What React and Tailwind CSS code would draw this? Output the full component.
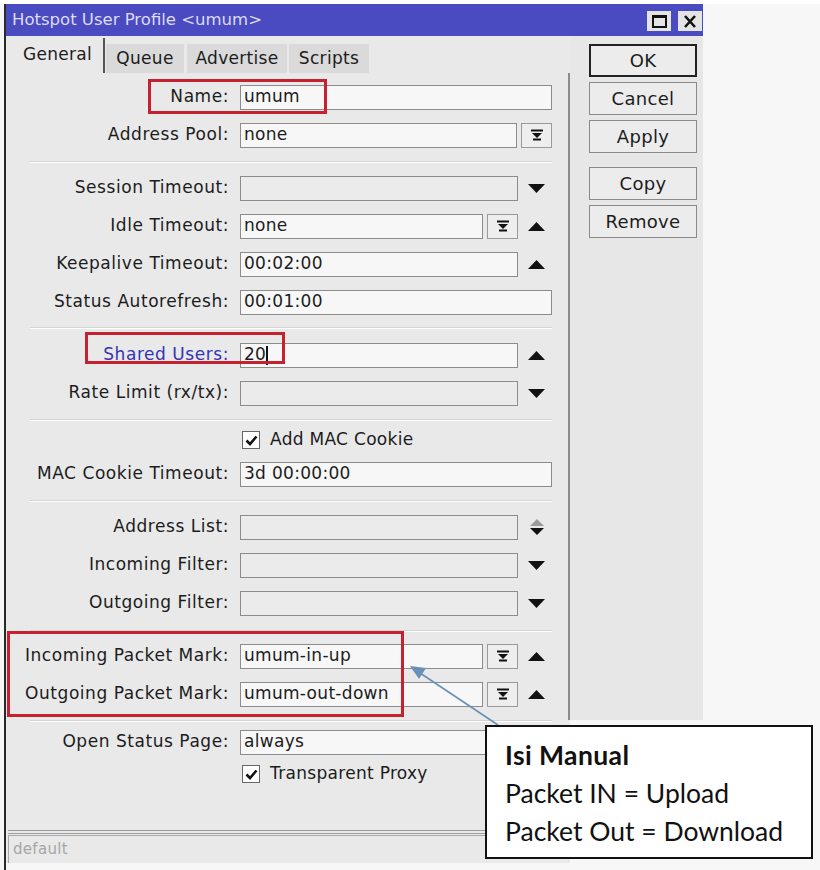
const DropBtn = () => (
  <div className="w-[31px] h-[25px] border border-[#9a9a9a] bg-[#eeeeee] flex items-center justify-center">
    <svg width="12" height="12" viewBox="0 0 12 12">
      <rect x="0" y="0.5" width="12" height="2" fill="#111" />
      <polygon points="1,4 11,4 6,9" fill="#111" />
      <rect x="2" y="9.5" width="8" height="2" fill="#111" />
    </svg>
  </div>
)

const Tri = ({ dir }) => (
  <svg width="17" height="9" viewBox="0 0 17 9">
    {dir === "up" ? <polygon points="0,9 8.5,0 17,9" fill="#111" /> : <polygon points="0,0 17,0 8.5,9" fill="#111" />}
  </svg>
)

const UpDown = () => (
  <svg width="16" height="17" viewBox="0 0 16 17">
    <polygon points="1,7 8,0 15,7" fill="#9a9a9a" />
    <polygon points="1,9 15,9 8,16" fill="#111" />
  </svg>
)

const Check = () => (
  <div className="w-[18px] h-[18px] border border-[#666] bg-white flex items-center justify-center">
    <svg width="13" height="11" viewBox="0 0 13 11">
      <path d="M1.5 5.5 L5 9 L11.5 1.5" stroke="#111" strokeWidth="2.6" fill="none" />
    </svg>
  </div>
)

const Row = ({ label, value, empty, drop, arrow, short, labelCls }) => (
  <div className="flex items-center h-[38px]">
    <div className={`w-[223px] text-right whitespace-nowrap tracking-[0.55px] ${labelCls || ""}`}>{label}</div>
    <div className="ml-[11px] w-[312px] flex items-center">
      <div
        className={`h-[25px] border border-[#8c8c8c] pl-[3px] flex items-center whitespace-nowrap overflow-hidden ${
          empty ? "bg-[#ebebeb]" : "bg-[#f7f7f7]"
        } ${short ? "w-[243px]" : drop || arrow ? "w-[278px]" : "w-[312px]"}`}
      >
        {value}
      </div>
      {drop && (
        <div className="ml-[4px]">
          <DropBtn />
        </div>
      )}
      {arrow && (
        <div className="w-[34px] flex justify-center pl-[3px]">
          {arrow === "updown" ? <UpDown /> : <Tri dir={arrow} />}
        </div>
      )}
    </div>
  </div>
)

const Sep = () => <div className="ml-[24px] w-[522px] h-[2px] border-t border-[#d3d3d3] border-b border-b-white" />

const CheckRow = ({ label, h }) => (
  <div className={`flex items-center ${h}`}>
    <div className="ml-[236px]">
      <Check />
    </div>
    <span className="ml-[10px]">{label}</span>
  </div>
)

const Btn = ({ children, main, mt }) => (
  <div
    className={`w-[108px] h-[33px] flex items-center justify-center text-[18px] bg-[#ececec] ${mt} ${
      main ? "border-2 border-[#222]" : "border border-[#8a8a8a]"
    }`}
  >
    {children}
  </div>
)

export default function App() {
  return (
    <div className="relative w-[820px] h-[870px] bg-[#f7f7f7] overflow-hidden font-['DejaVu_Sans',sans-serif] text-[17px] tracking-[0.3px] text-[#1c1c1c]">
      <div className="h-[4px] bg-white" />
      <div className="ml-[4px] w-[699px] border-l-2 border-[#2a2a2a] bg-[#f7f7f7]">
        <div className="h-[32px] bg-[#4b4bc1] flex items-center justify-between pl-[6px] pr-[1px]">
          <span className="text-[#dcdcf4] text-[16.5px] tracking-normal">Hotspot User Profile &lt;umum&gt;</span>
          <div className="flex gap-[7px] mt-[2px]">
            <div className="w-[24px] h-[20px] bg-[#e4e4e4] flex items-center justify-center">
              <div className="w-[15px] h-[13px] border-2 border-t-[3px] border-[#111]" />
            </div>
            <div className="w-[24px] h-[20px] bg-[#e4e4e4] flex items-center justify-center">
              <svg width="14" height="13" viewBox="0 0 14 13">
                <path d="M2 1 L12 12 M12 1 L2 12" stroke="#111" strokeWidth="2.6" />
              </svg>
            </div>
          </div>
        </div>

        <div className="flex items-start">
          <div className="w-[564px] bg-[#e9e9e9]">
            <div className="h-[37px] flex items-end pl-[6px]">
              <div className="h-[35px] w-[93px] border-r-2 border-[#555] flex items-center justify-center pb-[2px]">General</div>
              <div className="h-[29px] w-[78px] bg-[#dadada] flex items-center justify-center ml-[1px]">Queue</div>
              <div className="h-[29px] w-[100px] bg-[#dadada] flex items-center justify-center ml-[3px]">Advertise</div>
              <div className="h-[29px] w-[80px] bg-[#dadada] flex items-center justify-center ml-[2px]">Scripts</div>
            </div>

            <div className="border-r-2 border-[#8c8c8c] h-[647px]">
              <div className="pt-[5px] pb-[7px]">
                <Row label="Name:" value="umum" />
                <Row label="Address Pool:" value="none" drop />
              </div>
              <Sep />
              <div className="pt-[6px] pb-[6px]">
                <Row label="Session Timeout:" empty arrow="down" />
                <Row label="Idle Timeout:" value="none" short drop arrow="up" />
                <Row label="Keepalive Timeout:" value="00:02:00" arrow="up" />
                <Row label="Status Autorefresh:" value="00:01:00" />
              </div>
              <Sep />
              <div className="pt-[7px] pb-[7px]">
                <Row
                  label="Shared Users:"
                  labelCls="text-[#3434b4]"
                  value={
                    <span>
                      20<span className="inline-block w-[1.5px] h-[19px] bg-[#111] align-middle" />
                    </span>
                  }
                  arrow="up"
                />
                <Row label="Rate Limit (rx/tx):" empty arrow="down" />
              </div>
              <Sep />
              <div className="pt-[4px] pb-[7px]">
                <CheckRow label="Add MAC Cookie" h="h-[30px]" />
                <Row label="MAC Cookie Timeout:" value="3d 00:00:00" />
              </div>
              <Sep />
              <div className="pt-[6px] pb-[8px]">
                <Row label="Address List:" empty arrow="updown" />
                <Row label="Incoming Filter:" empty arrow="down" />
                <Row label="Outgoing Filter:" empty arrow="down" />
              </div>
              <Sep />
              <div className="pt-[5px] pb-[7px]">
                <Row label="Incoming Packet Mark:" value="umum-in-up" short drop arrow="up" />
                <Row label="Outgoing Packet Mark:" value="umum-out-down" short drop arrow="up" />
              </div>
              <Sep />
            </div>

            <div className="h-[110px] pt-[3px]">
              <Row label="Open Status Page:" value="always" drop />
              <CheckRow label="Transparent Proxy" h="h-[26px]" />
            </div>
            <div className="ml-[2px] h-[4px] border-t border-b border-[#9c9c9c]" />
            <div className="ml-[2px] mt-[1px] h-[28px] border-l border-t border-[#a8a8a8] flex items-center pl-[4px] text-[15px] text-[#a6a6a6]">
              default
            </div>
          </div>

          <div className="w-[133px] h-[684px] bg-[#e7e7e7] pl-[19px] pt-[8px]">
            <Btn main>OK</Btn>
            <Btn mt="mt-[5px]">Cancel</Btn>
            <Btn mt="mt-[5px]">Apply</Btn>
            <Btn mt="mt-[14px]">Copy</Btn>
            <Btn mt="mt-[5px]">Remove</Btn>
          </div>
        </div>
        <div className="h-[8px]" />
      </div>

      {/* highlight boxes */}
      <div className="absolute left-[148px] top-[79px] w-[179px] h-[35px] border-[3px] border-[#c6212e]" />
      <div className="absolute left-[85px] top-[332px] w-[200px] h-[32px] border-[3px] border-[#c6212e]" />
      <div className="absolute left-[7px] top-[631px] w-[397px] h-[86px] border-[3px] border-[#c6212e]" />

      <svg className="absolute left-0 top-0" width="820" height="870">
        <line x1="498" y1="725" x2="420" y2="673" stroke="#6a90b8" strokeWidth="1.6" />
        <polygon points="410,666 426,668 419,679" fill="#6a90b8" />
      </svg>

      <div className="absolute left-[485px] top-[725px] w-[328px] h-[134px] bg-white border-2 border-[#111] pl-[18px] pt-[9px] font-['Lato',sans-serif] text-[26.5px] leading-[38px] tracking-normal text-[#111]">
        <div className="font-bold tracking-[0.4px]">Isi Manual</div>
        <div>Packet IN = Upload</div>
        <div>Packet Out = Download</div>
      </div>
    </div>
  )
}
